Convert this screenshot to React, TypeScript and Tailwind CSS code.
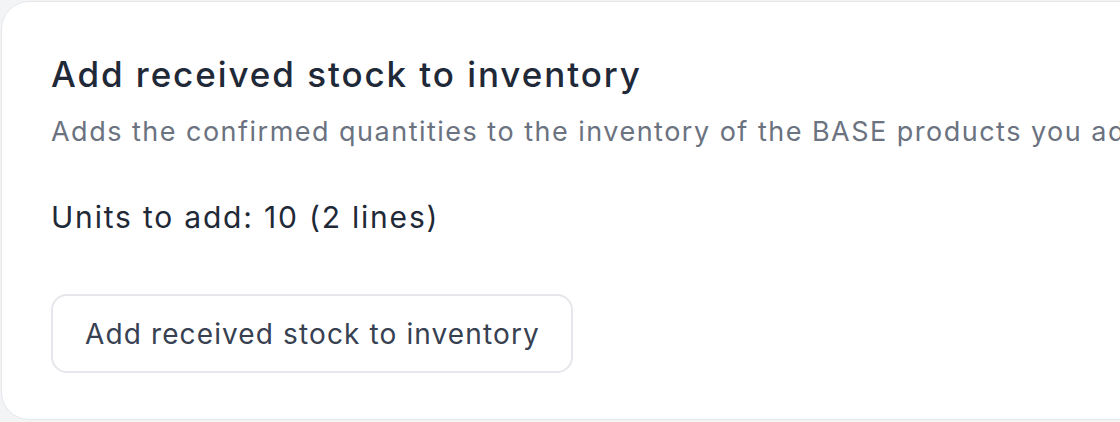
export default function App() {
  return (
    <div className="h-[422px] w-[1120px] overflow-hidden bg-[#f3f4f6] p-px font-['Inter','Noto_Sans',sans-serif]">
      <section className="h-[419px] w-[1500px] rounded-[28px] border border-[#e5e7eb] bg-white pl-[49px] pt-[50px]">
        <h2 className="text-[35px] font-medium leading-[44px] tracking-[0.055em] text-[#1f2937]">
          Add received stock to inventory
        </h2>
        <p className="mt-[19px] whitespace-nowrap text-[27px] leading-[34px] tracking-[0.055em] text-[#6b7280]">
          Adds the confirmed quantities to the inventory of the BASE products you added to this order.
        </p>
        <p className="mt-[48px] text-[30px] leading-[40px] tracking-[0.06em] text-[#1f2937]">
          Units to add: 10 (2 lines)
        </p>
        <button
          type="button"
          className="mt-[57px] h-[79px] rounded-[16px] border-2 border-[#e5e7eb] bg-white pl-[32px] pr-[31px] text-[28px] tracking-[0.04em] text-[#374151]"
        >
          Add received stock to inventory
        </button>
      </section>
    </div>
  );
}
